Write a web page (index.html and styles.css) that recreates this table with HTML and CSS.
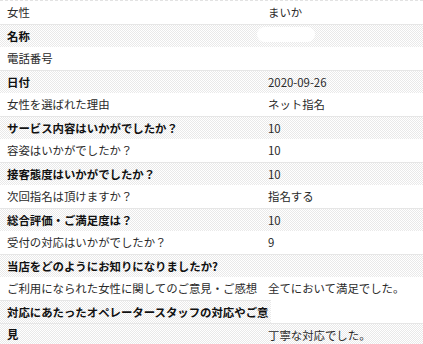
FILE: index.html
```html
<!DOCTYPE html>
<html lang="ja">
<head>
<meta charset="utf-8">
<link rel="stylesheet" href="styles.css">
</head>
<body>
<div class="table">
  <div class="row first"><div class="k">女性</div><div class="v">まいか</div></div>
  <div class="row alt"><div class="k">名称</div><div class="v"><span class="pill"></span></div></div>
  <div class="row"><div class="k">電話番号</div><div class="v"></div></div>
  <div class="row alt"><div class="k">日付</div><div class="v">2020-09-26</div></div>
  <div class="row"><div class="k">女性を選ばれた理由</div><div class="v">ネット指名</div></div>
  <div class="row alt"><div class="k">サービス内容はいかがでしたか？</div><div class="v">10</div></div>
  <div class="row"><div class="k">容姿はいかがでしたか？</div><div class="v">10</div></div>
  <div class="row alt"><div class="k">接客態度はいかがでしたか？</div><div class="v">10</div></div>
  <div class="row"><div class="k">次回指名は頂けますか？</div><div class="v">指名する</div></div>
  <div class="row alt"><div class="k">総合評価・ご満足度は？</div><div class="v">10</div></div>
  <div class="row"><div class="k">受付の対応はいかがでしたか？</div><div class="v">9</div></div>
  <div class="row alt"><div class="k">当店をどのようにお知りになりましたか?</div><div class="v"></div></div>
  <div class="row"><div class="k">ご利用になられた女性に関してのご意見・ご感想</div><div class="v">全てにおいて満足でした。</div></div>
  <div class="row split"><div class="k">対応にあたったオペレータースタッフの対応やご意見</div></div>
  <div class="row alt"><div class="k"></div><div class="v">丁寧な対応でした。</div></div>
</div>
</body>
</html>
```
FILE: styles.css
```css
html, body {
  margin: 0;
  padding: 0;
  background: #fff;
}
body {
  font-family: "Noto Sans CJK JP", "Noto Sans", sans-serif;
  font-size: 11.4px;
  color: #2a2a2a;
}
.table {
  display: block;
}
.row {
  display: grid;
  grid-template-columns: 268px 1fr;
  height: 23px;
  box-sizing: border-box;
  line-height: 23px;
}
.row .k {
  padding-left: 7px;
  white-space: nowrap;
}
.row.first {
  height: 24px;
  border-top: 1px dashed #e2e2e2;
}
.row.alt,
.row.split .k {
  background-color: #fff;
  background-image: conic-gradient(#e9e9e9 25%, #fff 0 50%, #e9e9e9 0 75%, #fff 0);
  background-size: 2px 2px;
  border-top: 1px solid #e6e6e6;
  line-height: 22px;
}
.row.alt .k,
.row.split .k {
  font-weight: bold;
  color: #111;
}
.row.split {
  display: block;
}
.row.split .k {
  width: 271px;
  box-sizing: border-box;
  height: 23px;
  white-space: normal;
  line-height: 22px;
}
.pill {
  display: inline-block;
  width: 58px;
  height: 15px;
  border-radius: 8px;
  background: #fff;
  margin-left: -11px;
  vertical-align: middle;
  position: relative;
  top: -3px;
}
```
